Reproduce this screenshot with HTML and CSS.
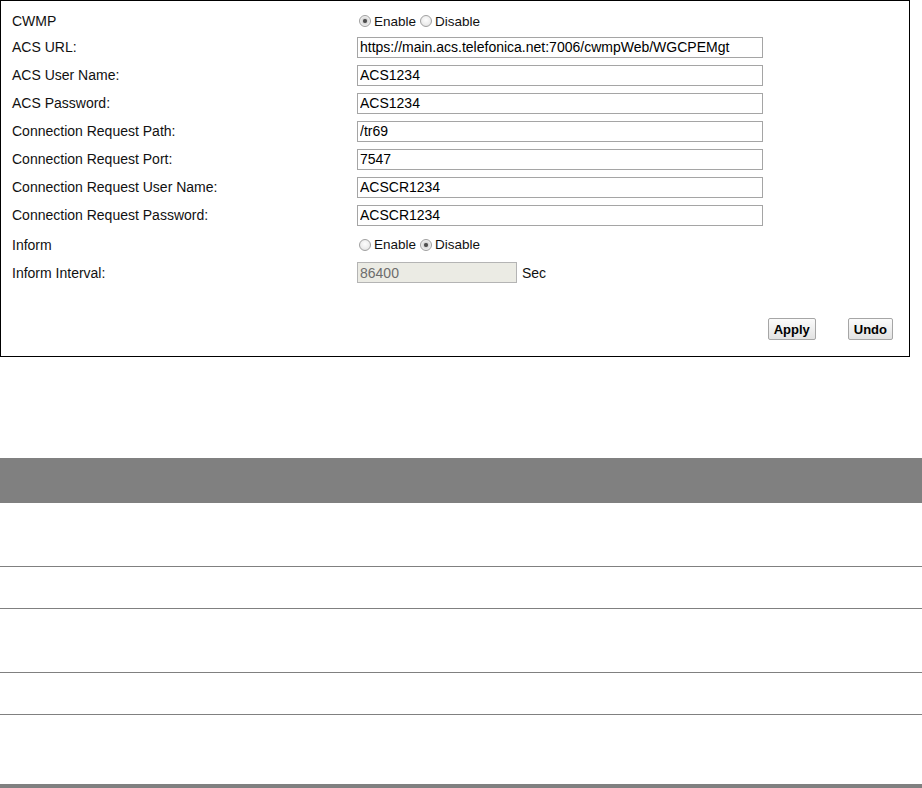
FILE: index.html
```html
<!DOCTYPE html>
<html lang="en">
<head>
    <meta charset="UTF-8">
    <title>TR-069</title>
    <link rel="stylesheet" href="styles.css">
</head>
<body>
    <div id="panel">
        <div class="row first">
            <div class="label">CWMP</div>
            <div class="value">
                <label><input type="radio" name="cwmp" checked>Enable</label>
                <label><input type="radio" name="cwmp">Disable</label>
            </div>
        </div>
        <div class="row">
            <div class="label">ACS URL:</div>
            <div class="value"><input class="text" type="text" value="https://main.acs.telefonica.net:7006/cwmpWeb/WGCPEMgt"></div>
        </div>
        <div class="row">
            <div class="label">ACS User Name:</div>
            <div class="value"><input class="text" type="text" value="ACS1234"></div>
        </div>
        <div class="row">
            <div class="label">ACS Password:</div>
            <div class="value"><input class="text" type="text" value="ACS1234"></div>
        </div>
        <div class="row">
            <div class="label">Connection Request Path:</div>
            <div class="value"><input class="text" type="text" value="/tr69"></div>
        </div>
        <div class="row">
            <div class="label">Connection Request Port:</div>
            <div class="value"><input class="text" type="text" value="7547"></div>
        </div>
        <div class="row">
            <div class="label">Connection Request User Name:</div>
            <div class="value"><input class="text" type="text" value="ACSCR1234"></div>
        </div>
        <div class="row">
            <div class="label">Connection Request Password:</div>
            <div class="value"><input class="text" type="text" value="ACSCR1234"></div>
        </div>
        <div class="row inform">
            <div class="label">Inform</div>
            <div class="value">
                <label><input type="radio" name="inform">Enable</label>
                <label><input type="radio" name="inform" checked>Disable</label>
            </div>
        </div>
        <div class="row interval">
            <div class="label">Inform Interval:</div>
            <div class="value"><input class="text short" type="text" value="86400" disabled><span class="unit">Sec</span></div>
        </div>
        <div class="buttons">
            <button type="button">Apply</button>
            <button type="button">Undo</button>
        </div>
    </div>

    <div id="list">
        <div class="list-head"></div>
        <div class="list-row tall"></div>
        <div class="list-row"></div>
        <div class="list-row tall"></div>
        <div class="list-row"></div>
        <div class="list-row last"></div>
    </div>
</body>
</html>
```

FILE: styles.css
```css
body {
    margin: 0;
    padding: 0;
    font-family: "Liberation Sans", Arial, sans-serif;
    font-size: 14px;
    color: #111;
    background: #fff;
}

#panel {
    width: 910px;
    height: 357px;
    box-sizing: border-box;
    border: 1px solid #000;
    padding: 8px 0 0 11px;
}

.row {
    display: flex;
    align-items: center;
    height: 28px;
}

.row.first {
    height: 24px;
}

.row.inform {
    height: 31px;
}

.row.interval {
    height: 25px;
}

.label {
    width: 345px;
}

.value {
    display: flex;
    align-items: center;
}

.value label {
    display: inline-flex;
    align-items: center;
    margin-right: 2px;
    font-size: 13.5px;
}

input[type=radio] {
    appearance: none;
    -webkit-appearance: none;
    width: 12px;
    height: 12px;
    margin: 0 3px 0 2px;
    border: 1px solid #a0a0a0;
    border-radius: 50%;
    box-sizing: border-box;
    background: radial-gradient(circle at 50% 40%, #fdfdfd 0%, #ececec 60%, #d6d6d6 100%);
}

input[type=radio]:checked {
    background: radial-gradient(circle, #444 0%, #5a5a5a 24%, #d8d8d8 36%, #f2f2f2 70%, #d6d6d6 100%);
}

.text {
    width: 406px;
    height: 21px;
    box-sizing: border-box;
    margin: 0;
    padding: 0 2px;
    border: 1px solid #a5a5a5;
    font-family: "Liberation Sans", Arial, sans-serif;
    font-size: 14px;
    color: #000;
    background: #fff;
}

.text.short {
    width: 160px;
    background: #ebebe4;
    color: #6d6d6d;
    border-color: #b4b4b4;
}

.unit {
    margin-left: 5px;
}

.buttons {
    display: flex;
    justify-content: flex-end;
    gap: 32px;
    padding: 33px 16px 0 0;
}

button {
    height: 22px;
    padding: 0 5px;
    border: 1px solid #a6a6a6;
    border-radius: 2px;
    background: linear-gradient(#fbfbfb, #e2e2e2);
    font-family: "Liberation Sans", Arial, sans-serif;
    font-size: 13px;
    font-weight: bold;
    color: #000;
}

#list {
    margin-top: 101px;
}

.list-head {
    height: 45px;
    background: #808080;
}

.list-row {
    height: 42px;
    border-bottom: 1px solid #808080;
    box-sizing: border-box;
}

.list-row.tall {
    height: 64px;
}

.list-row.last {
    height: 75px;
    border-bottom: 6px solid #808080;
}
```
